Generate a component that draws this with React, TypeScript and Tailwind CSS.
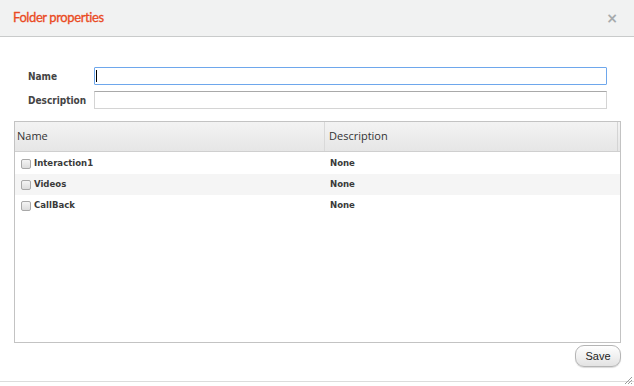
const rows = [
  { name: "Interaction1", description: "None" },
  { name: "Videos", description: "None" },
  { name: "CallBack", description: "None" },
];

export default function App() {
  return (
    <div className="relative w-[634px] h-[386px] bg-white overflow-hidden flex flex-col">
      {/* Header */}
      <div className="h-[37px] shrink-0 bg-[#f1f2f2] border-b border-[#c9cbcb] flex items-center justify-between pl-[13px] pr-[16px]">
        <span className="text-[13px] text-[#ea4a22] font-['Lato',sans-serif] tracking-[-0.4px] [-webkit-text-stroke:0.3px_#ea4a22]">
          Folder properties
        </span>
        <span className="text-[#a7abad] text-[14px] font-bold leading-none font-['DejaVu_Sans',sans-serif]">
          ×
        </span>
      </div>

      {/* Form */}
      <div className="pt-[30px] pl-[28px] pr-[27px] flex flex-col gap-[6px] font-['DejaVu_Sans_Condensed','DejaVu_Sans',sans-serif] text-[10px] font-bold text-[#444]">
        <div className="flex items-center">
          <label className="w-[66px]">Name</label>
          <div className="flex-1 h-[18px] border border-[#6ea7ec] rounded-[1px] bg-white flex items-center pl-[1px]">
            <span className="w-px h-[12px] bg-black" />
          </div>
        </div>
        <div className="flex items-center">
          <label className="w-[66px]">Description</label>
          <div className="flex-1 h-[18px] border border-[#d4d4d4] border-t-[#a9a9a9] bg-white" />
        </div>
      </div>

      {/* Table */}
      <div className="mt-[12px] ml-[14px] w-[607px] h-[222px] border border-[#c3c3c3] flex flex-col">
        <div className="h-[30px] shrink-0 flex bg-gradient-to-b from-[#f3f3f3] to-[#e6e6e6] border-b border-[#cfcfcf] text-[11px] text-[#333] font-['Open_Sans',sans-serif]">
          <div className="w-[310px] border-r border-[#d9d9d9] flex items-center pl-[2px]">Name</div>
          <div className="flex-1 flex items-center pl-[4px] border-r border-[#d4d4d4]">Description</div>
          <div className="w-[2px]" />
        </div>
        <div className="pt-[1px] font-['DejaVu_Sans_Condensed','DejaVu_Sans',sans-serif] text-[9.5px] font-bold text-[#3a3a3a]">
          {rows.map((r, i) => (
            <div
              key={r.name}
              className={`h-[21px] flex items-center ${i % 2 === 1 ? "bg-[#f5f5f5]" : "bg-white"}`}
            >
              <div className="w-[310px] flex items-center pl-[6px] gap-[3px]">
                <span className="w-[10px] h-[10px] rounded-[2px] border border-[#a8a8a8] bg-gradient-to-b from-[#f4f4f4] to-[#dcdcdc]" />
                {r.name}
              </div>
              <div className="flex-1 pl-[5px]">{r.description}</div>
            </div>
          ))}
        </div>
      </div>

      {/* Footer */}
      <div className="flex justify-end pr-[13px] pt-[2px]">
        <button className="w-[46px] h-[22px] rounded-[9px] border border-[#b5b5b5] bg-gradient-to-b from-[#ffffff] to-[#e3e3e3] shadow-[0_1px_1px_rgba(0,0,0,0.15)] text-[11px] text-[#222] font-['Liberation_Sans',sans-serif]">
          Save
        </button>
      </div>

      <div className="absolute left-0 right-0 bottom-[4px] h-px bg-[#dcdcdc]" />
      {/* Resize grip */}
      <svg className="absolute right-[1px] bottom-[1px]" width="10" height="10" viewBox="0 0 10 10">
        <path d="M9 2 L2 9 M9 5 L5 9 M9 8 L8 9" stroke="#9a9a9a" strokeWidth="1" />
      </svg>
    </div>
  );
}
